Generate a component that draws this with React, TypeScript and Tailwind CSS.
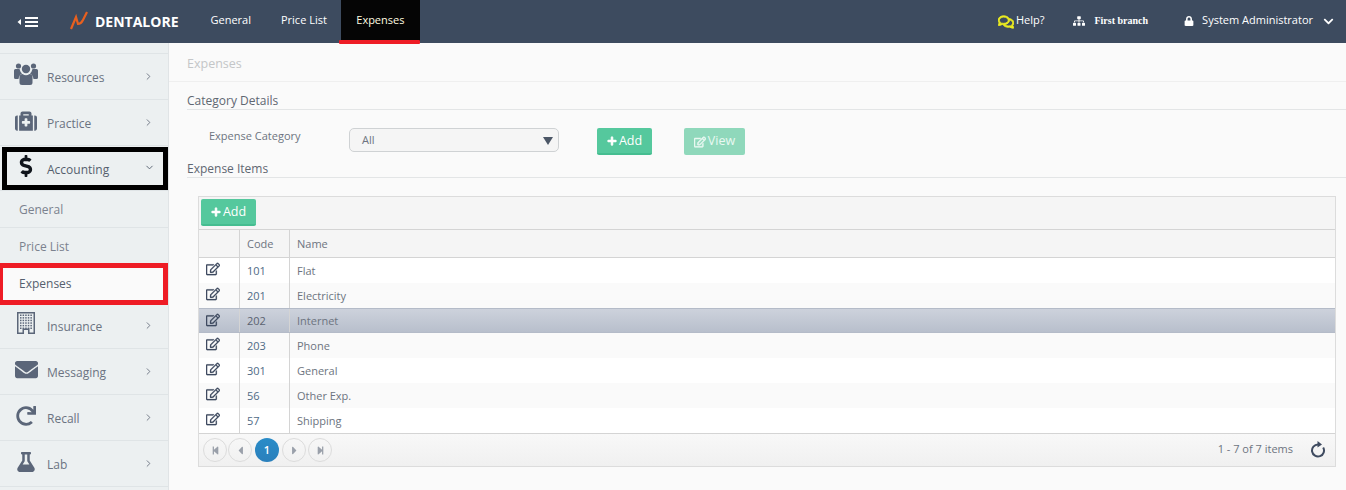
import { ReactNode } from "react";
import {
  FaMedkit,
  FaDollarSign,
  FaEnvelope,
  FaRedo,
  FaFlask,
  FaRegEdit,
  FaSitemap,
  FaLock,
  FaChevronDown,
  FaRegComments,
  FaPlus,
  FaCaretLeft,
  FaStepBackward,
  FaStepForward,
  FaCaretRight,
} from "react-icons/fa";
import { LuChevronRight, LuChevronDown } from "react-icons/lu";

const rows = [
  { code: "101", name: "Flat" },
  { code: "201", name: "Electricity" },
  { code: "202", name: "Internet", selected: true },
  { code: "203", name: "Phone" },
  { code: "301", name: "General" },
  { code: "56", name: "Other Exp." },
  { code: "57", name: "Shipping" },
];

function UsersIcon() {
  return (
    <svg width="24" height="23" viewBox="0 0 24 23" fill="currentColor">
      <circle cx="4.5" cy="4" r="2.6" />
      <circle cx="19.5" cy="4" r="2.6" />
      <circle cx="12" cy="7" r="4.2" />
      <path d="M0 8.5 Q0 7 1.5 7 H5.5 Q6.2 10 8 11.5 Q5 13 4.5 17 H1.5 Q0 17 0 15.5 Z" />
      <path d="M24 8.5 Q24 7 22.5 7 H18.5 Q17.8 10 16 11.5 Q19 13 19.5 17 H22.5 Q24 17 24 15.5 Z" />
      <path d="M5.5 15.5 Q5.5 12 8.5 12 Q12 14.5 15.5 12 Q18.5 12 18.5 15.5 V20.5 Q18.5 23 16 23 H8 Q5.5 23 5.5 20.5 Z" />
    </svg>
  );
}

function BuildingIcon() {
  const dots = [];
  for (let y = 0; y < 6; y++) {
    for (let x = 0; x < 5; x++) {
      dots.push(<rect key={`${x}-${y}`} x={3 + x * 2.6} y={2.5 + y * 2.6} width="1.5" height="1.5" />);
    }
  }
  return (
    <svg width="18" height="22" viewBox="0 0 18 22" fill="currentColor">
      <path d="M0 0 H18 V22 H11 V18 H7 V22 H0 Z M1.5 1.5 V20.5 H5.5 V16.5 H12.5 V20.5 H16.5 V1.5 Z" fillRule="evenodd" />
      {dots}
    </svg>
  );
}

function SideItem({ icon, label, height }: { icon: ReactNode; label: string; height: string }) {
  return (
    <div className={`flex ${height} items-center border-b border-[#dfe4e6] pl-[14px] pr-[14px] text-[#6b7381]`}>
      <div className="mr-[9px] flex w-[24px] justify-center text-[#5b6679]">{icon}</div>
      <span className="translate-y-[1px] text-[12px]">{label}</span>
      <LuChevronRight className="ml-auto text-[#6b7381]" size={11} />
    </div>
  );
}

function GreenButton({ label }: { label: string }) {
  return (
    <button className="flex h-[27px] w-[55px] items-center justify-center gap-[2px] rounded-[2px] border-b-2 border-[#45bd90] bg-[#55c89d] text-[12.5px] text-white">
      <FaPlus size={10} stroke="currentColor" strokeWidth={30} />
      <span className="translate-y-[1px]">{label}</span>
    </button>
  );
}

function PagerButton({ icon, active }: { icon?: ReactNode; active?: boolean }) {
  if (active) {
    return (
      <div className="flex h-6 w-6 items-center justify-center rounded-full bg-gradient-to-b from-[#2a8cc8] to-[#2a80bc] text-[11px] font-semibold text-white">
        1
      </div>
    );
  }
  return (
    <div className="flex h-6 w-6 items-center justify-center rounded-full border border-[#dcdcdc] text-[#9aa0aa]">
      {icon}
    </div>
  );
}

export default function App() {
  return (
    <div className="flex h-[490px] w-[1346px] flex-col overflow-hidden bg-[#fafafa] font-['Open_Sans',sans-serif]">
      <header className="flex h-[43px] shrink-0 items-center bg-[#3d4b5f] text-[11px] text-white">
        <div className="ml-[17px] flex w-[53px] items-center">
          <svg width="21" height="10" viewBox="0 0 21 10" fill="currentColor">
            <path d="M0.5 5 L4 2 V8 Z" />
            <rect x="8" y="0" width="13" height="2" />
            <rect x="8" y="4" width="13" height="2" />
            <rect x="8" y="8" width="13" height="2" />
          </svg>
        </div>
        <svg width="20" height="20" viewBox="0 0 20 20" className="-translate-y-[1px]">
          <path d="M1 18 L6 6 L8 13 Q11 13 13 9 L17 1" fill="none" stroke="#e8601f" strokeWidth="2.2" />
        </svg>
        <span className="ml-[5px] text-[14px] font-bold">DENTALORE</span>
        <span className="ml-[32px] -translate-y-[1px]">General</span>
        <span className="ml-[30px] -translate-y-[1px]">Price List</span>
        <div className="relative ml-[14px] flex h-full w-[79px] items-center justify-center bg-[#050505] text-[#fffbe0]">
          <span className="-translate-y-[1px]">Expenses</span>
          <div className="absolute -bottom-[1px] -left-[2px] h-[4px] w-[81px] rounded-[1px] bg-[#ee1c25]" />
        </div>
        <div className="ml-auto flex items-center">
          <FaRegComments size={16} stroke="currentColor" strokeWidth={30} className="text-[#ecec20]" />
          <span className="ml-[2px] -translate-y-[1px]">Help?</span>
          <FaSitemap size={12} className="ml-[29px] -translate-y-[1px]" />
          <span className="ml-[9px] -translate-y-[1px] font-['Liberation_Serif',serif] text-[10px] font-bold">First branch</span>
          <FaLock size={10} className="ml-[36px] -translate-y-[1px]" />
          <span className="ml-[8px] -translate-y-[1px]">System Administrator</span>
          <FaChevronDown size={11} className="ml-[10px] mr-[12px]" />
        </div>
      </header>

      <div className="flex min-h-0 flex-1">
        <aside className="w-[169px] shrink-0 border-r border-[#e0e4e6] bg-[#ecf0f1]">
          <div className="h-[11px] border-b border-[#dfe4e6]" />
          <SideItem height="h-[46px]" icon={<div className="-translate-y-[3px]"><UsersIcon /></div>} label="Resources" />
          <SideItem height="h-[46px]" icon={<FaMedkit size={22} className="-translate-y-[2px]" />} label="Practice" />
          <div className="ml-[2px] mt-[1px] flex h-[43px] items-center border-[5px] border-black pl-[7px] pr-[8px] text-[#555f6e]">
            <div className="mr-[9px] flex w-[24px] -translate-y-[3px] justify-center text-[#10151c]">
              <FaDollarSign size={22} />
            </div>
            <span className="translate-y-[1px] text-[12px]">Accounting</span>
            <LuChevronDown className="ml-auto -translate-y-[1px]" size={11} />
          </div>
          <div className="flex h-[38px] items-center border-y border-[#dfe4e6] pl-[19px] text-[12px] text-[#7b828e]">
            <span className="translate-y-[1px]">General</span>
          </div>
          <div className="flex h-[35px] items-center pl-[19px] text-[12px] text-[#7b828e]">
            <span className="translate-y-[1px]">Price List</span>
          </div>
          <div className="flex h-[42px] items-center border-y-[5px] border-l-[3px] border-r-[5px] border-[#ee1c25] bg-[#fafafa] pb-[1px] pl-[16px] text-[12px] text-[#555f6e]">
            Expenses
          </div>
          <SideItem height="h-[44px] pb-[2px]" icon={<div className="-translate-y-[3px]"><BuildingIcon /></div>} label="Insurance" />
          <SideItem height="h-[46px]" icon={<FaEnvelope size={23} className="-translate-y-[2px]" />} label="Messaging" />
          <SideItem height="h-[46px]" icon={<FaRedo size={20} className="-translate-y-[2px]" />} label="Recall" />
          <SideItem height="h-[46px]" icon={<FaFlask size={20} className="-translate-y-[2px]" />} label="Lab" />
        </aside>

        <main className="min-w-0 flex-1">
          <div className="flex h-[39px] items-center border-b border-[#efefef] pl-[18px] pt-[4px] text-[12.5px] text-[#c4c6c8]">
            Expenses
          </div>
          <div className="ml-[18px] mt-[11px] h-[17px] border-b border-[#e3e5e6] text-[12px] leading-[17px] text-[#5f6772]">
            <div className="-translate-y-[1px]">Category Details</div>
          </div>
          <div className="mt-[18px] flex h-[27px] items-start">
            <span className="ml-[40px] w-[140px] text-[11px] leading-[15px] text-[#6d7480]">Expense Category</span>
            <div className="flex h-[24px] w-[210px] items-center rounded-[5px] border border-[#cfd2d4] bg-[#f5f5f5] pl-[12px] pr-[5px] text-[11px] text-[#6d7480]">
              All
              <svg width="10" height="8" viewBox="0 0 10 8" fill="#4b5666" className="ml-auto translate-y-[1px]">
                <path d="M0 0 H10 L5 8 Z" />
              </svg>
            </div>
            <div className="ml-[38px]">
              <GreenButton label="Add" />
            </div>
            <button className="ml-[32px] flex h-[27px] w-[61px] items-center justify-center gap-[2px] rounded-[2px] bg-[#8fd8bb] text-[12.5px] text-[#e9f8f2]">
              <FaRegEdit size={12} stroke="currentColor" strokeWidth={25} />
              <span>View</span>
            </button>
          </div>
          <div className="ml-[18px] mt-[5px] h-[18px] border-b border-[#e3e5e6] text-[12px] leading-[17px] text-[#5f6772]">
            <div>Expense Items</div>
          </div>

          <section className="ml-[29px] mr-[10px] mt-[18px] border border-[#dcdcdc] bg-white text-[11px] text-[#6d7480]">
            <div className="flex h-[33px] items-start border-b border-[#d4d4d4] bg-[#f5f5f5] pl-[2px] pt-[2px]">
              <GreenButton label="Add" />
            </div>
            <div className="flex h-[28px] items-center border-b border-[#d4d4d4] bg-[#f5f5f5]">
              <div className="h-full w-[41px] border-r border-[#d4d4d4]" />
              <div className="flex h-full w-[50px] items-center border-r border-[#d4d4d4] pl-[7px] pt-[2px]">Code</div>
              <div className="pl-[7px] pt-[2px]">Name</div>
            </div>
            {rows.map((row, i) => (
              <div
                key={row.code}
                className={
                  row.selected
                    ? "flex h-[25px] items-center border-y border-[#b4bbc8] bg-gradient-to-b from-[#cdd2dc] to-[#b8bfcc]"
                    : i % 2 === 1
                      ? "flex h-[25px] items-center bg-[#fafafa]"
                      : "flex h-[25px] items-center bg-white"
                }
              >
                <div className="flex h-full w-[41px] items-start border-r border-[#d4d4d4] pl-[7px] pt-[4px] text-[#3f4b60]">
                  <FaRegEdit size={14} stroke="currentColor" strokeWidth={8} />
                </div>
                <div className={row.selected ? "flex h-full w-[50px] items-center border-r border-[#d4d4d4] pl-[7px] pt-[2px] text-[#5a6270]" : "flex h-full w-[50px] items-center border-r border-[#d4d4d4] pl-[7px] pt-[2px] text-[#4f6a85]"}>
                  {row.code}
                </div>
                <div className="pl-[7px] pt-[2px]">{row.name}</div>
              </div>
            ))}
            <div className="flex h-[33px] items-center border-t border-[#d4d4d4] bg-gradient-to-b from-[#f8f8f8] to-[#f0f0f0] pl-[4px]">
              <PagerButton icon={<FaStepBackward size={9} />} />
              <div className="ml-[1px]"><PagerButton icon={<FaCaretLeft size={13} />} /></div>
              <div className="ml-[3px]"><PagerButton active /></div>
              <div className="ml-[3px]"><PagerButton icon={<FaCaretRight size={13} />} /></div>
              <div className="ml-[2px]"><PagerButton icon={<FaStepForward size={9} />} /></div>
              <span className="ml-auto -translate-y-[1px]">1 - 7 of 7 items</span>
              <svg width="16" height="17" viewBox="0 0 16 17" fill="none" className="ml-[17px] mr-[9px] -translate-y-[1px] text-[#3f4b60]">
                <path d="M8 3.5 A6 6 0 1 0 13.2 6.5" stroke="currentColor" strokeWidth="2" />
                <path d="M7.5 0 L12 3.5 L7.5 6.5 Z" fill="currentColor" />
              </svg>
            </div>
          </section>
        </main>
      </div>
    </div>
  );
}
